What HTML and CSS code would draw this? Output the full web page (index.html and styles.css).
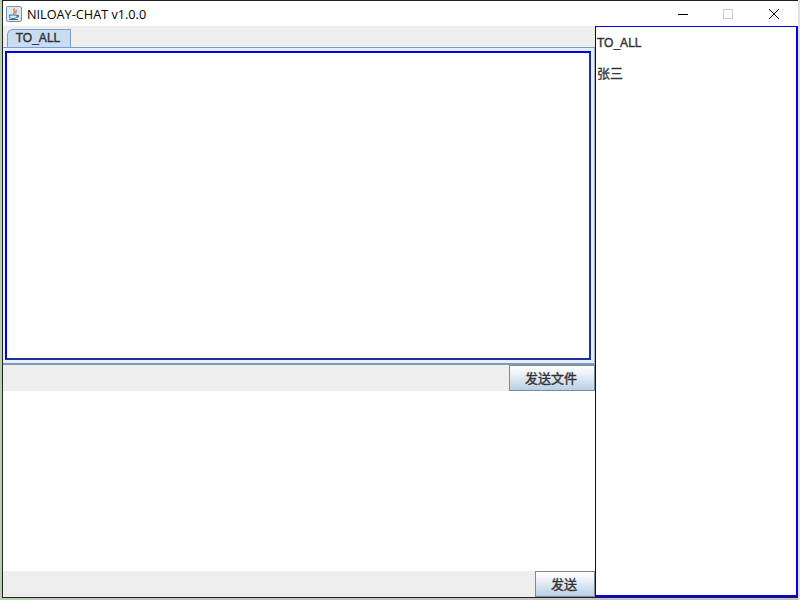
FILE: index.html
```html
<!DOCTYPE html>
<html lang="zh">
<head>
<meta charset="utf-8">
<title>NILOAY-CHAT v1.0.0</title>
<link rel="stylesheet" href="styles.css">
</head>
<body>
<div class="window">
  <div class="titlebar">
    <svg class="app-icon" width="16" height="16" viewBox="0 0 16 16">
      <rect x="0.5" y="0.5" width="15" height="15" rx="1.5" fill="#dfe8f2" stroke="#7f93a8"/>
      <path d="M8.5 2.5C6.5 4.5 10 5.5 7.5 8M10.5 4C9 5.5 11 6 9.5 7.5" fill="none" stroke="#e0661a" stroke-width="1.2"/>
      <path d="M3.5 9h7.5v1.2C11 12 9.5 12.5 7 12.5S3.5 12 3.5 10.2zM11 9.5h1.5v1.5H11M3 13.5h9" fill="none" stroke="#2f6fa8" stroke-width="1"/>
    </svg>
    <span class="title">NILOAY-CHAT v1.0.0</span>
    <div class="controls">
      <svg class="ctl" width="46" height="26" viewBox="0 0 46 26"><path d="M19 13.5h10" stroke="#000" stroke-width="1"/></svg>
      <svg class="ctl" width="46" height="26" viewBox="0 0 46 26"><rect x="18.5" y="8.5" width="9" height="9" fill="none" stroke="#ccc"/></svg>
      <svg class="ctl" width="46" height="26" viewBox="0 0 46 26"><path d="M18 8l10 10M28 8l-10 10" stroke="#000" stroke-width="1"/></svg>
    </div>
  </div>
  <div class="content">
    <div class="left">
      <div class="tabstrip"><div class="tab">TO_ALL</div></div>
      <div class="tabpane"><div class="chatlog"></div></div>
      <div class="toolbar"><button class="btn btn-file">发送文件</button></div>
      <div class="input"></div>
      <div class="toolbar"><button class="btn btn-send">发送</button></div>
    </div>
    <div class="users">
      <div class="user user-latin">TO_ALL</div>
      <div class="user user-cjk">张三</div>
    </div>
  </div>
</div>
</body>
</html>
```
FILE: styles.css
```css
html, body { margin: 0; padding: 0; }
body {
  width: 800px;
  height: 600px;
  overflow: hidden;
  background: linear-gradient(90deg, #b9cfb4 40px, #c4c4c4 40px, #c4c4c4 798px, #e2e2e2 798px);
  font-family: "Liberation Sans", "Noto Sans CJK SC", sans-serif;
  padding-left: 2px;
  box-sizing: border-box;
}
.window {
  width: 796px;
  height: 598px;
  background: #fff;
  border-top: 1px solid #222;
  border-left: 1px solid #222;
  border-bottom: 1px solid #222;
  box-sizing: border-box;
  display: flex;
  flex-direction: column;
}
.titlebar {
  height: 25px;
  flex: none;
  display: flex;
  align-items: center;
  padding-left: 3px;
  background: #fff;
}
.app-icon { flex: none; margin-right: 5px; }
.title { font-size: 12.7px; color: #000; font-family: "Open Sans", sans-serif; }
.controls { margin-left: auto; display: flex; margin-right: 1px; }
.ctl { display: block; }
.content { flex: 1; display: flex; min-height: 0; }
.left { width: 592px; flex: none; display: flex; flex-direction: column; background: #eee; }
.tabstrip { height: 21px; flex: none; padding: 3px 0 0 4px; box-sizing: border-box; display: flex; }
.tab {
  width: 64px;
  height: 18px;
  box-sizing: border-box;
  border: 1px solid #7a9cc6;
  border-bottom: 0;
  border-top-left-radius: 6px;
  background: #c8dcf2;
  font-size: 12px;
  color: #333;
  -webkit-text-stroke: 0.4px #333;
  text-align: center;
  line-height: 17px;
  padding-right: 2px;
}
.tabpane {
  height: 318px;
  flex: none;
  box-sizing: border-box;
  padding: 3px 3px 3px 2px;
  background: #e6eef8;
  border-top: 1px solid #7a9cc6;
  border-bottom: 2px solid #8099b3;
  border-right: 1px solid #9fb0c4;
}
.chatlog {
  height: 100%;
  box-sizing: border-box;
  border: 2px solid #0000f0;
  border-right-color: #1c2fa0;
  border-bottom-color: #1c2fa0;
  background: #fff;
}
.toolbar { height: 26px; flex: none; display: flex; justify-content: flex-end; background: #eee; }
.btn {
  height: 26px;
  box-sizing: border-box;
  border: 1px solid #7a8a99;
  background: linear-gradient(#fff, #e6eef6 40%, #b8cfe4);
  font-size: 13px;
  font-family: "Noto Sans CJK SC", sans-serif;
  color: #333;
  -webkit-text-stroke: 0.4px #333;
  padding: 0 2px 2px 0;
}
.btn-file { width: 86px; }
.btn-send { width: 60px; }
.input { flex: 1; background: #fff; }
.users {
  flex: 1;
  box-sizing: border-box;
  border: 2px solid #0000f0;
  border-left: 1px solid #0000a0;
  border-top-width: 1px;
  background: #fff;
  padding: 8px 1px;
}
.user { color: #333; height: 31px; line-height: 16px; }
.user-latin { font-size: 12px; -webkit-text-stroke: 0.4px #333; }
.user-cjk { font-size: 13px; line-height: 14px; font-family: "Noto Sans CJK SC", sans-serif; -webkit-text-stroke: 0.3px #333; }
```
